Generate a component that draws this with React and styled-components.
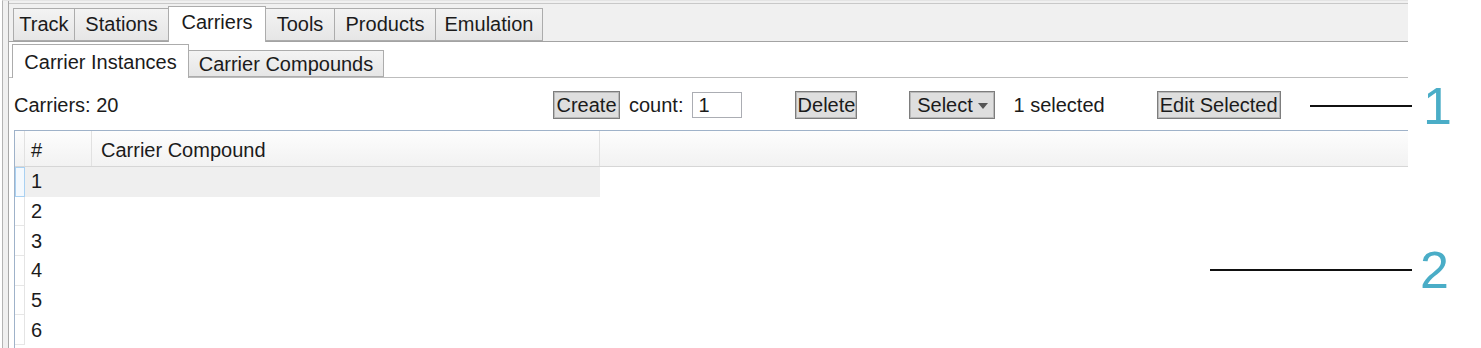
import React from "react";
import styled, { createGlobalStyle } from "styled-components";

const GlobalStyle = createGlobalStyle`
  html, body { margin: 0; padding: 0; background: #ffffff; }
  body {
    font-family: "Liberation Sans", Arial, sans-serif;
    font-size: 20px;
    color: #1b1b1b;
  }
  * { box-sizing: border-box; }
`;

const Page = styled.div`
  position: relative;
  width: 1481px;
  height: 348px;
  overflow: hidden;
  background: #ffffff;
`;

const Frame = styled.div`
  width: 1406px;
  height: 348px;
  margin-left: 2px;
  border-left: 1px solid #b4b4b4;
  border-top: 1px solid #e4e4e4;
  padding-left: 5px;
  background: #f0f0f0;
  display: flex;
`;

const Window = styled.div`
  flex: 1;
  display: flex;
  flex-direction: column;
  border-left: 1px solid #a8a8a8;
`;

const TabStrip = styled.div`
  height: 39px;
  display: flex;
  align-items: flex-end;
  padding-left: 4px;
  border-bottom: 1px solid #a3a3a3;
  background: #f0f0f0;
  border-top: 1px solid #c8c8c8;
  margin-top: 2px;
`;

const Tab = styled.div`
  width: ${(p) => p.$w}px;
  height: ${(p) => (p.$active ? 36 : 33)}px;
  margin-left: -1px;
  margin-bottom: ${(p) => (p.$active ? -1 : 0)}px;
  display: flex;
  align-items: center;
  justify-content: center;
  border: 1px solid #acacac;
  border-bottom: ${(p) => (p.$active ? "none" : "1px solid #acacac")};
  background: ${(p) => (p.$active ? "#ffffff" : "linear-gradient(#f3f3f3, #e6e6e6)")};
  position: relative;
  z-index: ${(p) => (p.$active ? 2 : 1)};
  padding-bottom: ${(p) => (p.$active ? 4 : 1)}px;
  white-space: nowrap;
  &:first-child { margin-left: 0; }
`;

const Panel = styled.div`
  flex: 1;
  background: #ffffff;
  display: flex;
  flex-direction: column;
`;

const SubStrip = styled.div`
  height: 36px;
  display: flex;
  align-items: flex-end;
  padding-left: 3px;
  border-bottom: 1px solid #bdbdbd;
`;

const SubTab = styled.div`
  width: ${(p) => p.$w}px;
  height: ${(p) => (p.$active ? 34 : 27)}px;
  margin-bottom: ${(p) => (p.$active ? -1 : 0)}px;
  margin-left: ${(p) => (p.$active ? 0 : -1)}px;
  display: flex;
  align-items: center;
  justify-content: center;
  border: 1px solid #acacac;
  border-bottom: ${(p) => (p.$active ? "none" : "1px solid #acacac")};
  background: ${(p) => (p.$active ? "#ffffff" : "linear-gradient(#f3f3f3, #e6e6e6)")};
  position: relative;
  z-index: ${(p) => (p.$active ? 2 : 1)};
  padding-top: ${(p) => (p.$active ? 1 : 2)}px;
  white-space: nowrap;
`;

const Toolbar = styled.div`
  height: 52px;
  display: flex;
  align-items: center;
  padding-left: 5px;
  padding-top: 2px;
`;

const CountLabel = styled.div`
  width: 539px;
  white-space: nowrap;
`;

const Button = styled.div`
  width: ${(p) => p.$w}px;
  height: 28px;
  margin-left: ${(p) => p.$ml || 0}px;
  display: flex;
  align-items: center;
  justify-content: center;
  gap: 5px;
  border: 1px solid #7d7d7d;
  box-shadow: inset 0 0 0 1px #b9b9b9;
  background: #dedede;
  white-space: nowrap;
`;

const Text = styled.div`
  margin-left: ${(p) => p.$ml || 0}px;
  white-space: nowrap;
`;

const CountInput = styled.div`
  width: 50px;
  height: 26px;
  margin-left: 9px;
  border: 1px solid #abadb3;
  background: #ffffff;
  display: flex;
  align-items: center;
  padding-left: 5px;
`;

const Caret = styled.span`
  width: 0;
  height: 0;
  border-left: 5px solid transparent;
  border-right: 5px solid transparent;
  border-top: 6px solid #555555;
  margin-top: 2px;
`;

const Grid = styled.div`
  margin-left: 5px;
  flex: 1;
  border-top: 1px solid #9fb2c9;
  border-left: 1px solid #9fb2c9;
  display: flex;
  flex-direction: column;
`;

const HeaderRow = styled.div`
  height: 36px;
  display: flex;
  background: linear-gradient(#fdfdfd, #f2f2f2);
  border-bottom: 1px solid #d6d6d6;
`;

const HeaderCell = styled.div`
  width: ${(p) => p.$w}px;
  flex: ${(p) => (p.$w ? "none" : 1)};
  display: flex;
  align-items: center;
  padding-left: ${(p) => p.$pl || 0}px;
  padding-top: 4px;
  border-right: ${(p) => (p.$w ? "1px solid #e1e1e1" : "none")};
  white-space: nowrap;
`;

const Row = styled.div`
  height: 29.7px;
  display: flex;
  flex: none;
`;

const RowHead = styled.div`
  width: 10px;
  flex: none;
  background: ${(p) => (p.$current ? "#f4f9fe" : "#ffffff")};
  border: ${(p) => (p.$current ? "1px solid #a9d1f2" : "none")};
  border-right: 1px solid ${(p) => (p.$current ? "#a9d1f2" : "#e4e4e4")};
  border-bottom: 1px solid ${(p) => (p.$current ? "#a9d1f2" : "#e6e6e6")};
`;

const Cell = styled.div`
  width: 575px;
  flex: none;
  display: flex;
  align-items: center;
  padding-left: 6px;
  background: ${(p) => (p.$current ? "#efefef" : "#ffffff")};
`;

const CalloutLine = styled.div`
  position: absolute;
  left: ${(p) => p.$x}px;
  top: ${(p) => p.$y}px;
  width: ${(p) => p.$w}px;
  height: 2px;
  background: #111111;
`;

const CalloutNum = styled.div`
  position: absolute;
  left: ${(p) => p.$x}px;
  top: ${(p) => p.$y}px;
  font-family: "Liberation Sans", Arial, sans-serif;
  font-size: 52px;
  line-height: 1;
  color: #4aadc7;
`;

const mainTabs = [
  { label: "Track", w: 62 },
  { label: "Stations", w: 95 },
  { label: "Carriers", w: 98, active: true },
  { label: "Tools", w: 70 },
  { label: "Products", w: 102 },
  { label: "Emulation", w: 108 },
];

const rows = [1, 2, 3, 4, 5, 6];

export default function App() {
  return (
    <Page>
      <GlobalStyle />
      <Frame>
        <Window>
          <TabStrip>
            {mainTabs.map((t) => (
              <Tab key={t.label} $w={t.w} $active={t.active}>
                {t.label}
              </Tab>
            ))}
          </TabStrip>
          <Panel>
            <SubStrip>
              <SubTab $w={177} $active>
                Carrier Instances
              </SubTab>
              <SubTab $w={196}>Carrier Compounds</SubTab>
            </SubStrip>
            <Toolbar>
              <CountLabel>Carriers: 20</CountLabel>
              <Button $w={67}>Create</Button>
              <Text $ml={9}>count:</Text>
              <CountInput>1</CountInput>
              <Button $w={62} $ml={53}>
                Delete
              </Button>
              <Button $w={86} $ml={52}>
                Select
                <Caret />
              </Button>
              <Text $ml={18}>1 selected</Text>
              <Button $w={124} $ml={52}>
                Edit Selected
              </Button>
            </Toolbar>
            <Grid>
              <HeaderRow>
                <HeaderCell $w={10} />
                <HeaderCell $w={67} $pl={6}>
                  #
                </HeaderCell>
                <HeaderCell $w={508} $pl={9}>
                  Carrier Compound
                </HeaderCell>
                <HeaderCell />
              </HeaderRow>
              {rows.map((n) => (
                <Row key={n}>
                  <RowHead $current={n === 1} />
                  <Cell $current={n === 1}>{n}</Cell>
                </Row>
              ))}
            </Grid>
          </Panel>
        </Window>
      </Frame>
      <CalloutLine $x={1310} $y={105} $w={102} />
      <CalloutNum $x={1423} $y={80}>1</CalloutNum>
      <CalloutLine $x={1210} $y={269} $w={202} />
      <CalloutNum $x={1420} $y={244}>2</CalloutNum>
    </Page>
  );
}
